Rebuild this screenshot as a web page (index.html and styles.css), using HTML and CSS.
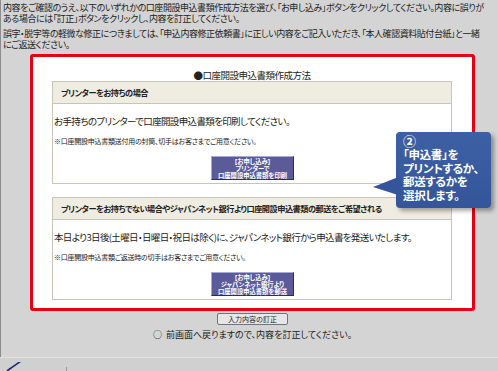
FILE: index.html
```html
<!DOCTYPE html>
<html lang="ja">
<head>
    <meta charset="utf-8">
    <title>口座開設申込書類作成方法</title>
    <link rel="stylesheet" href="styles.css">
</head>
<body>
    <div class="page">
        <div class="content">
            <p class="lead">内容をご確認のうえ、以下のいずれかの口座開設申込書類作成方法を選び、「お申し込み」ボタンをクリックしてください。内容に誤りが<br>ある場合には「訂正」ボタンをクリックし、内容を訂正してください。</p>
            <p class="lead">誤字・脱字等の軽微な修正につきましては、「申込内容修正依頼書」に正しい内容をご記入いただき、「本人確認資料貼付台紙」と一緒<br>にご返送ください。</p>

            <div class="frame">
                <div class="frame-title">●口座開設申込書類作成方法</div>

                <section class="panel">
                    <div class="panel-head">プリンターをお持ちの場合</div>
                    <div class="panel-body">
                        <p class="msg">お手持ちのプリンターで口座開設申込書類を印刷してください。</p>
                        <p class="note">※口座開設申込書類送付用の封筒、切手はお客さまでご用意ください。</p>
                        <div class="btn-row">
                            <a class="apply-btn" href="#">【お申し込み】<br>プリンターで<br>口座開設申込書類を印刷</a>
                        </div>
                    </div>
                </section>

                <section class="panel">
                    <div class="panel-head">プリンターをお持ちでない場合やジャパンネット銀行より口座開設申込書類の郵送をご希望される</div>
                    <div class="panel-body">
                        <p class="msg">本日より3日後(土曜日・日曜日・祝日は除く)に、ジャパンネット銀行から申込書を発送いたします。</p>
                        <p class="note">※口座開設申込書類ご返送時の切手はお客さまでご用意ください。</p>
                        <div class="btn-row">
                            <a class="apply-btn" href="#">【お申し込み】<br>ジャパンネット銀行より<br>口座開設申込書類を郵送</a>
                        </div>
                    </div>
                </section>
            </div>

            <div class="actions">
                <button class="fix-btn">入力内容の訂正</button>
                <p class="back">○&nbsp; 前画面へ戻りますので、内容を訂正してください。</p>
            </div>
        </div>

        <div class="footer">
            <svg class="check" width="24" height="10" viewBox="0 0 24 10">
                <path d="M4 9 L8 6 M8 6 Q11 4 18 -1" fill="none" stroke="#22227a" stroke-width="1.6"/>
            </svg>
            <span class="tick"></span>
        </div>

        <div class="callout">
            <span class="num">②</span>
            「申込書」を<br>プリントするか、<br>郵送するかを<br>選択します。
        </div>
    </div>
</body>
</html>
```

FILE: styles.css
```css
body {
    margin: 0;
    background-color: #d4d4d4;
    font-family: "Noto Sans CJK JP", "Liberation Sans", sans-serif;
    font-feature-settings: "palt";
    color: #222;
}
.page {
    position: relative;
    width: 498px;
    height: 371px;
    overflow: hidden;
}
.content {
    height: 357px;
    border-left: 1px solid #8c8c8c;
    padding-left: 2px;
    padding-top: 2px;
    box-sizing: border-box;
}
.lead {
    margin: 0 0 4px;
    font-size: 9px;
    line-height: 11px;
    letter-spacing: -0.45px;
    white-space: nowrap;
}
.frame {
    width: 445px;
    height: 257px;
    margin-left: 27px;
    border: 3px solid #e60012;
    border-radius: 3px;
    background-color: #fff;
    padding: 0 20px 0 19px;
    box-sizing: border-box;
}
.frame-title {
    padding-top: 13px;
    font-size: 9.5px;
    line-height: 11px;
    letter-spacing: -0.5px;
    text-align: center;
}
.panel {
    border: 1px solid #c9c5b6;
    margin-bottom: 13px;
}
.panel-head {
    height: 21px;
    line-height: 20px;
    background-color: #efece2;
    border-bottom: 1px solid #c9c5b6;
    padding-left: 8px;
    font-size: 8.2px;
    font-weight: bold;
    letter-spacing: -0.5px;
    white-space: nowrap;
    overflow: hidden;
}
.panel-body {
    padding: 10px 0 3px 1px;
}
.msg {
    margin: 0;
    font-size: 9.5px;
    line-height: 14px;
    letter-spacing: -0.65px;
    white-space: nowrap;
}
.note {
    margin: 8px 0 0;
    font-size: 7px;
    line-height: 10px;
    letter-spacing: -0.25px;
    white-space: nowrap;
}
.btn-row {
    margin-top: 10px;
    display: flex;
    justify-content: center;
}
.apply-btn {
    display: flex;
    flex-direction: column;
    justify-content: center;
    width: 83px;
    height: 24px;
    box-sizing: border-box;
    background-color: #5b5b9a;
    border: 1px solid;
    border-color: #a8a8d8 #2c2c58 #2c2c58 #a8a8d8;
    color: #fff;
    font-size: 6.3px;
    font-weight: bold;
    line-height: 7px;
    text-align: center;
    text-decoration: none;
    white-space: nowrap;
}
.actions {
    display: flex;
    flex-direction: column;
    align-items: center;
    padding-left: 4px;
}
.fix-btn {
    margin-top: 2px;
    width: 71px;
    height: 12px;
    padding: 0;
    background-color: #e6e6e6;
    border: 1px solid #6e7480;
    border-radius: 2px;
    font-family: inherit;
    font-size: 7px;
    line-height: 10px;
    color: #222;
}
.back {
    margin: 4px 0 0;
    font-size: 9px;
    line-height: 12px;
}
.footer {
    height: 14px;
    border-top: 1px solid #e2e2e2;
    background-color: #d0d0d0;
    display: flex;
    align-items: flex-end;
}
.check {
    margin-left: 3px;
}
.tick {
    width: 1px;
    height: 5px;
    margin-left: 39px;
    background-color: #9a9a9a;
}
.callout {
    position: absolute;
    left: 396px;
    top: 132px;
    width: 95px;
    height: 76px;
    padding: 2px 0 0 7px;
    box-sizing: border-box;
    background: linear-gradient(#3d60a4, #34559a);
    border-radius: 4px;
    box-shadow: 3px 3px 4px rgba(0, 0, 0, .35);
    color: #fff;
    font-size: 11.5px;
    font-weight: bold;
    line-height: 13.7px;
    letter-spacing: -0.3px;
    white-space: nowrap;
}
.callout::before {
    content: "";
    position: absolute;
    left: -23px;
    top: 44px;
    width: 28px;
    height: 20px;
    background-color: #34559a;
    clip-path: polygon(0 55%, 100% 0, 100% 100%);
}
.num {
    display: block;
    font-size: 13px;
    line-height: 14px;
}
```
